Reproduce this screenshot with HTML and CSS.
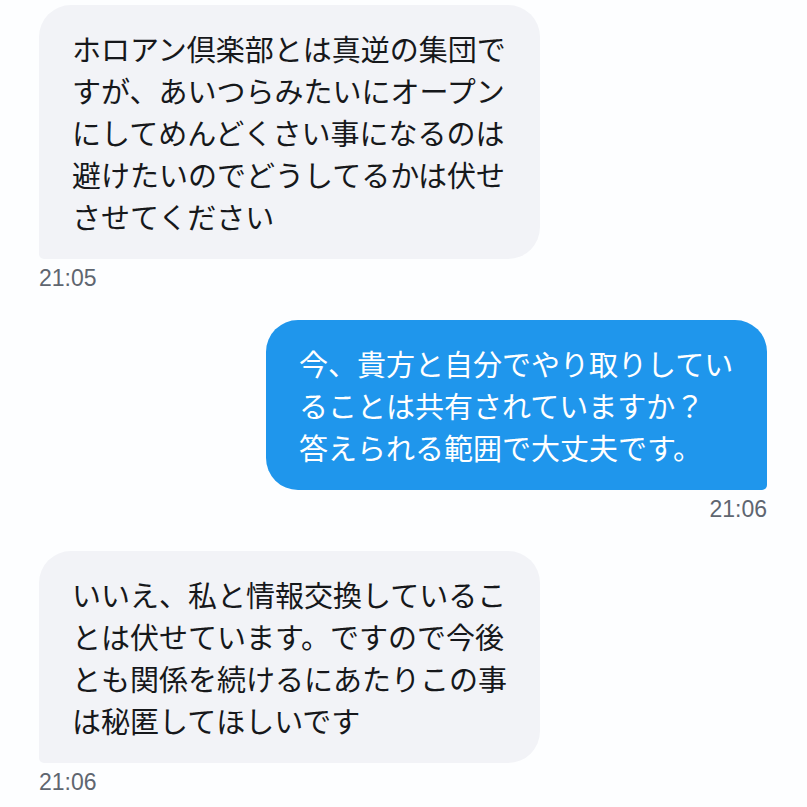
FILE: index.html
```html
<!DOCTYPE html>
<html lang="ja">
<head>
    <meta charset="UTF-8">
    <meta name="viewport" content="width=device-width, initial-scale=1.0">
    <title>メッセージ</title>
    <link rel="stylesheet" href="styles.css">
</head>
<body>
    <div class="chat">
        <div class="msg recv">
            <div class="bubble">ホロアン倶楽部とは真逆の集団ですが、あいつらみたいにオープンにしてめんどくさい事になるのは避けたいのでどうしてるかは伏せさせてください</div>
            <div class="time">21:05</div>
        </div>
        <div class="msg sent">
            <div class="bubble">今、貴方と自分でやり取りしていることは共有されていますか？<br>答えられる範囲で大丈夫です。</div>
            <div class="time">21:06</div>
        </div>
        <div class="msg recv">
            <div class="bubble">いいえ、私と情報交換していることは伏せています。ですので今後とも関係を続けるにあたりこの事は秘匿してほしいです</div>
            <div class="time">21:06</div>
        </div>
    </div>
</body>
</html>
```

FILE: styles.css
```css
body {
    margin: 0;
    background-color: #fdfeff;
    font-family: "Noto Sans CJK JP", "Noto Sans", sans-serif;
}
.chat {
    display: flex;
    flex-direction: column;
    gap: 30px;
    padding: 5px 40px 0 39px;
}
.msg {
    display: flex;
    flex-direction: column;
    gap: 7px;
}
.msg.recv {
    align-items: flex-start;
}
.msg.sent {
    align-items: flex-end;
}
.bubble {
    width: 435px;
    padding: 22px 33px;
    font-size: 29px;
    line-height: 42px;
    border-radius: 32px;
}
.recv .bubble {
    background-color: #f2f3f7;
    color: #16181b;
    border-bottom-left-radius: 5px;
}
.sent .bubble {
    background-color: #1f96ec;
    color: #ffffff;
    border-bottom-right-radius: 5px;
}
.time {
    font-family: "Liberation Sans", Arial, sans-serif;
    font-size: 23px;
    line-height: 24px;
    color: #5f6670;
}
```
